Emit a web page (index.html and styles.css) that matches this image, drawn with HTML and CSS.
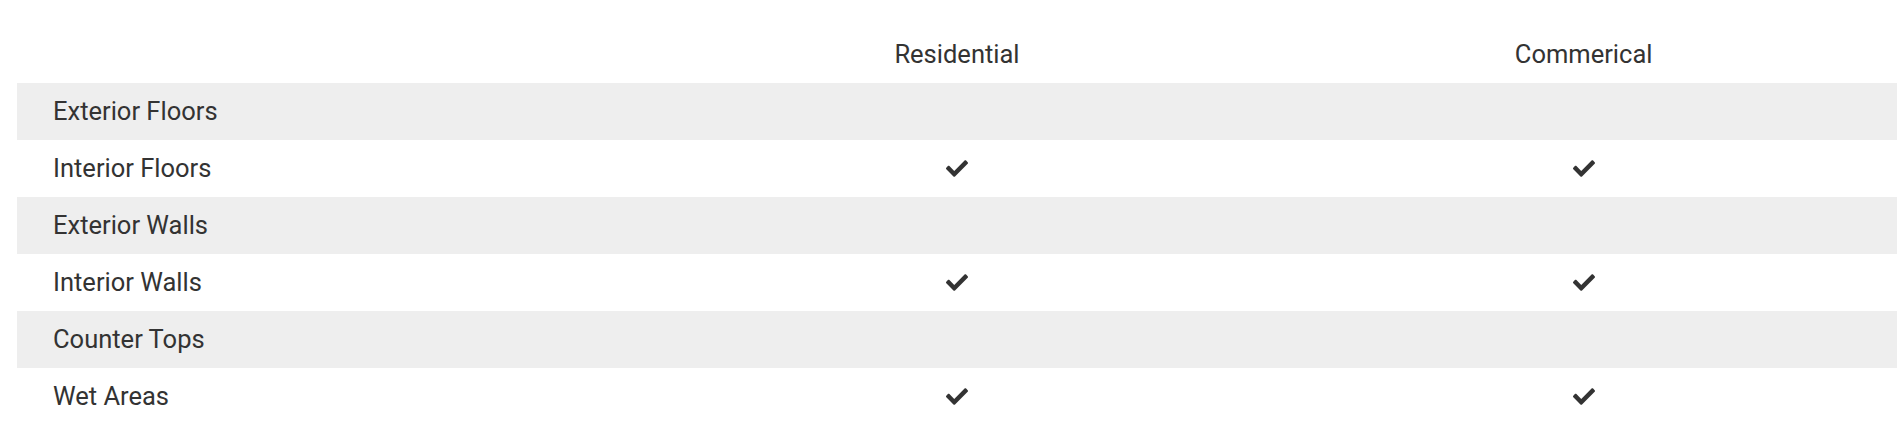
FILE: index.html
```html
<!DOCTYPE html>
<html>
<head>
<meta charset="utf-8">
<link rel="stylesheet" href="styles.css">
</head>
<body>
<div class="wrap">
  <table class="cmp">
    <thead>
      <tr><th class="label"></th><th>Residential</th><th>Commerical</th></tr>
    </thead>
    <tbody>
      <tr class="alt"><td class="label">Exterior Floors</td><td></td><td></td></tr>
      <tr><td class="label">Interior Floors</td><td><svg class="chk" viewBox="0 64 512 384"><path d="M173.898 439.404l-166.4-166.4c-9.997-9.997-9.997-26.206 0-36.204l36.203-36.204c9.997-9.998 26.207-9.998 36.204 0L192 312.69 432.095 72.596c9.997-9.997 26.207-9.997 36.204 0l36.203 36.204c9.997 9.997 9.997 26.206 0 36.204l-294.4 294.401c-9.998 9.997-26.207 9.997-36.204-.001z"/></svg></td><td><svg class="chk" viewBox="0 64 512 384"><path d="M173.898 439.404l-166.4-166.4c-9.997-9.997-9.997-26.206 0-36.204l36.203-36.204c9.997-9.998 26.207-9.998 36.204 0L192 312.69 432.095 72.596c9.997-9.997 26.207-9.997 36.204 0l36.203 36.204c9.997 9.997 9.997 26.206 0 36.204l-294.4 294.401c-9.998 9.997-26.207 9.997-36.204-.001z"/></svg></td></tr>
      <tr class="alt"><td class="label">Exterior Walls</td><td></td><td></td></tr>
      <tr><td class="label">Interior Walls</td><td><svg class="chk" viewBox="0 64 512 384"><path d="M173.898 439.404l-166.4-166.4c-9.997-9.997-9.997-26.206 0-36.204l36.203-36.204c9.997-9.998 26.207-9.998 36.204 0L192 312.69 432.095 72.596c9.997-9.997 26.207-9.997 36.204 0l36.203 36.204c9.997 9.997 9.997 26.206 0 36.204l-294.4 294.401c-9.998 9.997-26.207 9.997-36.204-.001z"/></svg></td><td><svg class="chk" viewBox="0 64 512 384"><path d="M173.898 439.404l-166.4-166.4c-9.997-9.997-9.997-26.206 0-36.204l36.203-36.204c9.997-9.998 26.207-9.998 36.204 0L192 312.69 432.095 72.596c9.997-9.997 26.207-9.997 36.204 0l36.203 36.204c9.997 9.997 9.997 26.206 0 36.204l-294.4 294.401c-9.998 9.997-26.207 9.997-36.204-.001z"/></svg></td></tr>
      <tr class="alt"><td class="label">Counter Tops</td><td></td><td></td></tr>
      <tr><td class="label">Wet Areas</td><td><svg class="chk" viewBox="0 64 512 384"><path d="M173.898 439.404l-166.4-166.4c-9.997-9.997-9.997-26.206 0-36.204l36.203-36.204c9.997-9.998 26.207-9.998 36.204 0L192 312.69 432.095 72.596c9.997-9.997 26.207-9.997 36.204 0l36.203 36.204c9.997 9.997 9.997 26.206 0 36.204l-294.4 294.401c-9.998 9.997-26.207 9.997-36.204-.001z"/></svg></td><td><svg class="chk" viewBox="0 64 512 384"><path d="M173.898 439.404l-166.4-166.4c-9.997-9.997-9.997-26.206 0-36.204l36.203-36.204c9.997-9.998 26.207-9.998 36.204 0L192 312.69 432.095 72.596c9.997-9.997 26.207-9.997 36.204 0l36.203 36.204c9.997 9.997 9.997 26.206 0 36.204l-294.4 294.401c-9.998 9.997-26.207 9.997-36.204-.001z"/></svg></td></tr>
    </tbody>
  </table>
</div>
</body>
</html>
```

FILE: styles.css
```css
html, body {
  margin: 0;
  padding: 0;
  background: #fff;
}
.wrap {
  padding: 26px 5px 0 17px;
}
.cmp {
  width: 1880px;
  border-collapse: collapse;
  table-layout: fixed;
  font-family: Roboto, "Liberation Sans", sans-serif;
  font-size: 25.5px;
  line-height: 30px;
  color: #333;
}
.cmp tr {
  height: 57px;
}
.cmp th, .cmp td {
  padding: 0 0 2px;
  text-align: center;
  vertical-align: middle;
  font-weight: 400;
}
.cmp .label {
  text-align: left;
  padding-left: 36px;
}
.cmp tr.alt {
  background: #eeeeee;
}
.chk {
  display: block;
  width: 22px;
  height: 17px;
  margin: 2px auto 0;
  fill: #333;
}
```
